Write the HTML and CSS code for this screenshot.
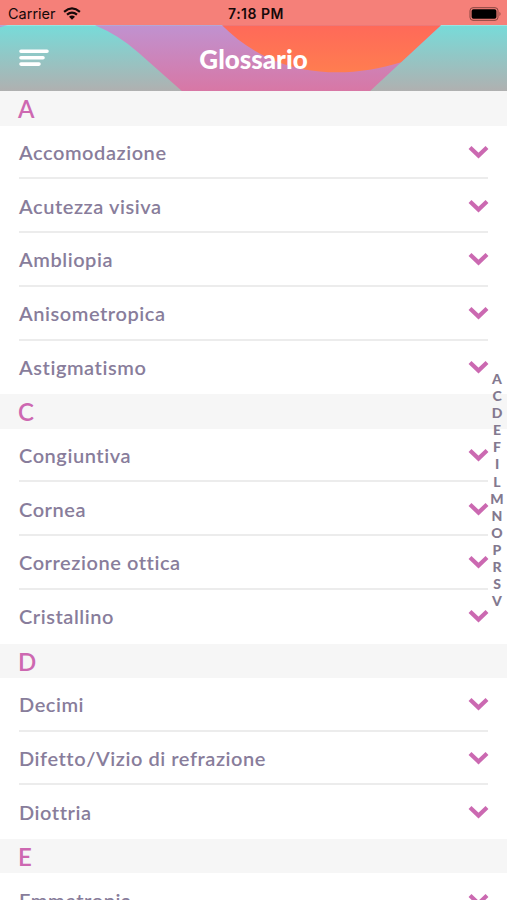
FILE: index.html
```html
<!DOCTYPE html>
<html lang="it">
<head>
<meta charset="utf-8">
<title>Glossario</title>
<link rel="stylesheet" href="styles.css">
</head>
<body>
<div class="status">
  <div class="carrier"><span>Carrier</span>
    <svg width="18" height="13" viewBox="0 0 18 13" fill="none" stroke="#160909" stroke-width="2.2"><path d="M1.1 4.8Q9-2 16.900 4.800M4 7.700Q9 3.400 14 7.700"/><path d="M6 9.700Q9 7.200 12 9.700L9 12.800Z" fill="#160909" stroke="none"/></svg>
  </div>
  <div class="time">7:18 PM</div>
  <svg class="battery" width="33" height="14" viewBox="0 0 33 14"><rect x="1" y=".7" width="28" height="12.600" rx="3" fill="none" stroke="#87443f" stroke-width="1"/><rect x="2.600" y="2.300" width="24.800" height="9.400" rx="1.800"/><path d="M30.500 4.800q2 2.200 0 4.400z" fill="#87443f"/></svg>
</div>
<header class="header">
  <svg class="art" width="507" height="66" viewBox="0 0 507 66">
    <defs>
      <linearGradient id="teal" x2="0" y2="1"><stop stop-color="#77dbd9"/><stop offset="1" stop-color="#b0b0b0"/></linearGradient>
      <linearGradient id="pink" gradientUnits="userSpaceOnUse" x1="0" y1="0" x2="0" y2="66"><stop stop-color="#c092d0"/><stop offset="1" stop-color="#d877a5"/></linearGradient>
      <linearGradient id="orange" gradientUnits="userSpaceOnUse" x1="0" y1="0" x2="0" y2="47"><stop stop-color="#ff6959"/><stop offset="1" stop-color="#ff7d50"/></linearGradient>
    </defs>
    <path fill="url(#teal)" d="M0 0H507V66H0z"/>
    <path fill="url(#pink)" d="M0 0H8Q4 .5 0 2zM95 0Q119 10 138 27L182 66H370L441 0z"/>
    <path fill="url(#orange)" d="M222 0C242 20 270 38 303 44C335 50 370 47 401 37L441 0z"/>
  </svg>
  <svg class="menu" width="30" height="18" viewBox="0 0 30 18" stroke="#fff" stroke-width="3.600" stroke-linecap="round"><path d="M2 2.300H28M2 8.700H24M2 15.100H20"/></svg>
  <h1>Glossario</h1>
</header>
<main>
  <h2>A</h2>
  <ul>
    <li><span>Accomodazione</span></li>
    <li><span>Acutezza visiva</span></li>
    <li><span>Ambliopia</span></li>
    <li><span>Anisometropica</span></li>
    <li><span>Astigmatismo</span></li>
  </ul>
  <h2>C</h2>
  <ul>
    <li><span>Congiuntiva</span></li>
    <li><span>Cornea</span></li>
    <li><span>Correzione ottica</span></li>
    <li><span>Cristallino</span></li>
  </ul>
  <h2>D</h2>
  <ul>
    <li><span>Decimi</span></li>
    <li><span>Difetto/Vizio di refrazione</span></li>
    <li><span>Diottria</span></li>
  </ul>
  <h2>E</h2>
  <ul>
    <li><span>Emmetropia</span></li>
  </ul>
</main>
<nav class="index"><a>A</a><a>C</a><a>D</a><a>E</a><a>F</a><a>I</a><a>L</a><a>M</a><a>N</a><a>O</a><a>P</a><a>R</a><a>S</a><a>V</a></nav>
<script src="app.js"></script>
</body>
</html>
```
FILE: styles.css
```css
* { box-sizing: border-box; }
body { margin: 0; width: 507px; height: 900px; overflow: hidden; position: relative; background: #fff; font-family: Lato, sans-serif; }
.status { height: 25px; background: #f58079; display: grid; grid-template-columns: 1fr auto 1fr; align-items: center; padding: 2px 5px 0 8px; font: 14.5px/22px Inter, sans-serif; color: #160909; }
.carrier { display: flex; align-items: center; gap: 7px; }
.time { font-weight: 600; font-size: 14px; letter-spacing: .5px; margin-left: 2px; }
.battery { justify-self: end; }
.header { height: 66.3px; position: relative; display: grid; grid-template-columns: 1fr auto 1fr; align-items: center; padding-left: 19px; padding-right: 19px; }
.art { position: absolute; left: 0; top: 0; height: 66.3px; }
.menu { position: relative; }
h1 { position: relative; margin: 1px 0 0; color: #fff; font: 900 26px/30px Lato, sans-serif; letter-spacing: 0; }
h2 { margin: 0; height: 34.3px; padding-left: 18px; background: #f6f6f6; color: #cd68b1; font: 600 24px/35px Lato, sans-serif; }
ul { list-style: none; margin: 0; padding: 0 19px; }
li { height: 53.75px; padding-top: .8px; display: flex; align-items: center; justify-content: space-between; border-bottom: 2px solid #ececec; color: #887d9b; font-weight: 600; font-size: 20px; line-height: 24px; letter-spacing: .55px; }
li:last-child { border-color: transparent; }
li svg { flex: none; margin-right: -1px; }
.index { position: absolute; right: 0; top: 370px; width: 20px; display: flex; flex-direction: column; text-align: center; color: #83798f; font: 900 14px/17.1px Lato, sans-serif; }
```
FILE: app.js
```js
const chevron = '<svg width="21" height="14" viewBox="0 0 21 14" fill="none" stroke="#cb69b1" stroke-width="4.2"><path d="M2 2.500L10.500 10.500L19 2.500"/></svg>';
document.querySelectorAll('li').forEach(row => row.insertAdjacentHTML('beforeend', chevron));
```
